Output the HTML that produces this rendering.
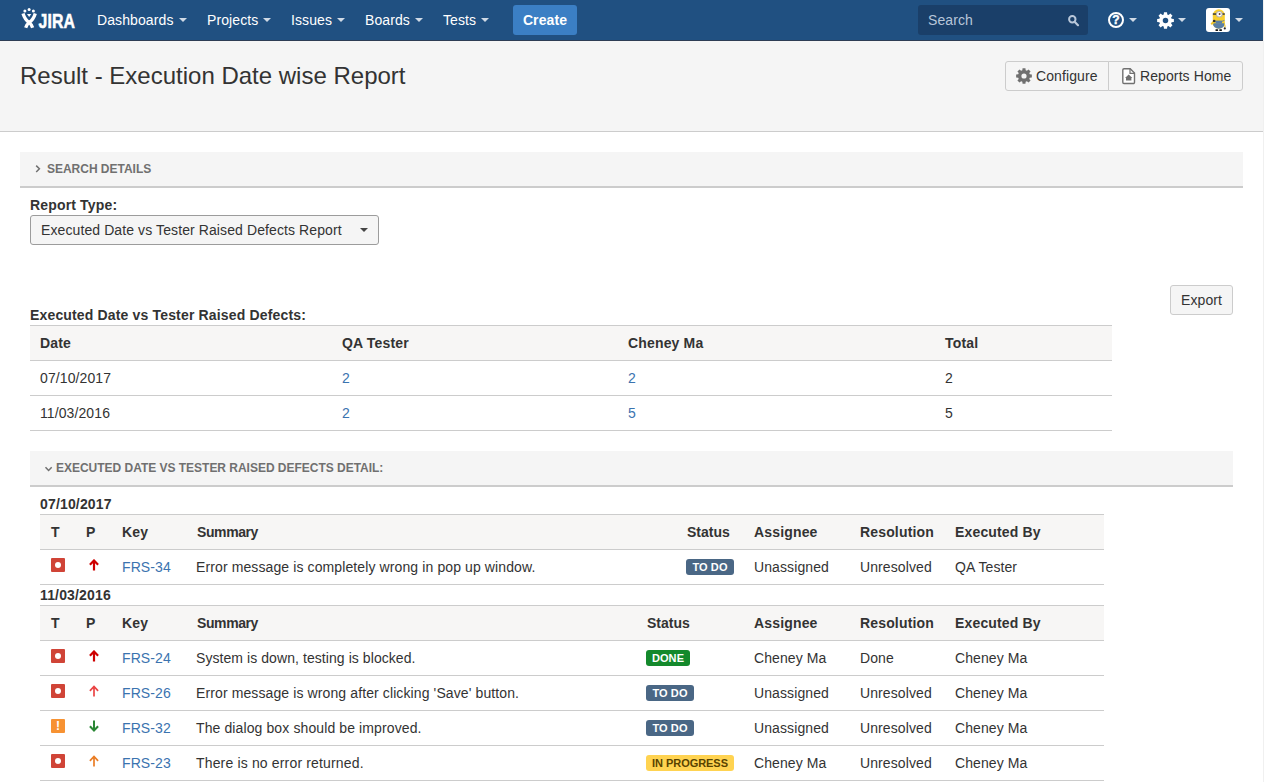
<!DOCTYPE html>
<html lang="en">
<head>
<meta charset="utf-8">
<title>Result - Execution Date wise Report</title>
<style>
*{box-sizing:border-box;}
html,body{margin:0;padding:0;}
body{width:1264px;height:782px;overflow:hidden;background:#fff;color:#333;font-family:"Liberation Sans",Arial,sans-serif;font-size:14px;line-height:20px;position:relative;letter-spacing:0.1px;}
a{color:#3b73af;text-decoration:none;}
/* header */
#hdr{position:absolute;left:0;top:0;width:1264px;height:41px;background:#205081;border-bottom:1px solid #2e3d54;}
#hdr .nav{position:absolute;top:0;height:41px;line-height:40px;color:#fff;font-size:14px;white-space:nowrap;}
#hdr .nav i{display:inline-block;width:0;height:0;border-left:4px solid transparent;border-right:4px solid transparent;border-top:4px solid #d0dae6;margin-left:5px;vertical-align:middle;position:relative;top:-1px;}
#create{position:absolute;left:513px;top:5px;width:64px;height:30px;background:#3b7fc4;border-radius:3px;color:#fff;font-weight:bold;font-size:14px;line-height:30px;text-align:center;}
#search{position:absolute;left:918px;top:5px;width:170px;height:30px;background:#1a3f69;border-radius:3px;color:#b7c6d9;font-size:14px;line-height:30px;padding-left:10px;}
.caret{position:absolute;width:0;height:0;border-left:4px solid transparent;border-right:4px solid transparent;border-top:4px solid #d0dae6;}
/* page header */
#phdr{position:absolute;left:0;top:41px;width:1264px;height:91px;background:#f5f5f5;border-bottom:1px solid #ccc;}
#phdr h1{letter-spacing:0;position:absolute;left:20px;top:20px;margin:0;font-size:24px;line-height:30px;font-weight:normal;color:#333;white-space:nowrap;}
.btn{position:absolute;height:30px;border:1px solid #ccc;background:#f5f5f5;color:#333;font-size:14px;line-height:28px;white-space:nowrap;}
/* content */
.bar{letter-spacing:-0.02px;position:absolute;background:#f5f5f5;border-bottom:2px solid #ccc;height:36px;color:#707070;font-size:12px;font-weight:bold;line-height:34px;white-space:nowrap;}
.lbl{letter-spacing:0.16px;position:absolute;font-weight:bold;color:#333;font-size:14px;line-height:20px;white-space:nowrap;}
table{position:absolute;border-collapse:collapse;table-layout:fixed;font-size:14px;color:#333;}
th{letter-spacing:0.16px;background:#f7f6f5;text-align:left;font-weight:bold;height:35px;padding:0;border-top:1px solid #ccc;border-bottom:1px solid #ccc;white-space:nowrap;}
td{height:35px;padding:0;border-bottom:1px solid #ccc;white-space:nowrap;}
.loz{display:inline-block;font-size:11px;font-weight:bold;line-height:16px;height:16px;padding:0;text-align:center;margin-left:-1px;border-radius:3px;color:#fff;vertical-align:middle;position:relative;top:-1px;letter-spacing:0.1px;}
.todo{background:#4a6785;width:48px;}
.done{background:#14892c;width:44px;}
.prog{background:#ffd351;color:#594300;width:88px;letter-spacing:-0.05px;}
.bug{display:inline-block;width:14px;height:14px;background:#d04437;border-radius:1px;vertical-align:middle;position:relative;left:1px;top:-3px;}
.bug:after{content:"";position:absolute;left:3.9px;top:3.9px;width:6.2px;height:6.2px;border-radius:50%;background:#fff;}
.imp{display:inline-block;width:14px;height:14px;background:#f79232;border-radius:1px;vertical-align:middle;position:relative;left:1px;top:-3px;color:#fff;font-weight:bold;font-size:12px;line-height:14px;text-align:center;}
.ar{position:relative;left:3px;top:-3px;vertical-align:middle;}
.det td.sm{padding-left:0;position:relative;left:-1px;letter-spacing:0.11px;}
.det th.sm0{letter-spacing:-0.4px;}
</style>
</head>
<body>
<div id="hdr">
  <div class="nav" style="left:97px">Dashboards<i></i></div>
  <div class="nav" style="left:207px">Projects<i></i></div>
  <div class="nav" style="left:291px">Issues<i></i></div>
  <div class="nav" style="left:365px">Boards<i></i></div>
  <div class="nav" style="left:443px">Tests<i></i></div>
  <div id="create">Create</div>
  <div id="search">Search</div>
  <svg id="logo" width="97" height="41" viewBox="0 0 97 41" style="position:absolute;left:0;top:0">
    <circle cx="24.9" cy="10.9" r="1.5" fill="#fff"/><circle cx="29.1" cy="9.5" r="1.5" fill="#fff"/><circle cx="33.4" cy="10.9" r="1.5" fill="#fff"/>
    <path d="M23,13.5 C24.6,18.6 26.8,21 29.2,22.5 C30.8,23.6 31.8,25.4 32.6,27.8" stroke="#fff" stroke-width="3.3" fill="none"/>
    <path d="M35.3,13.5 C33.7,18.6 31.5,21 29.1,22.5 C27.5,23.6 26.5,25.4 25.7,27.8" stroke="#fff" stroke-width="3.3" fill="none"/>
    <path d="M27,14.1 L31.3,14.1 L29.15,16.9Z" fill="#fff"/>
    <text x="38.6" y="27.8" font-family="Liberation Sans, Arial, sans-serif" font-weight="bold" font-size="19.6" fill="#fff" stroke="#fff" stroke-width="0.5" textLength="36.4" lengthAdjust="spacingAndGlyphs">JIRA</text>
  </svg>
  <svg width="14" height="14" viewBox="0 0 14 14" style="position:absolute;left:1066px;top:13px"><circle cx="6.3" cy="6.3" r="3.2" stroke="#b9c7d9" stroke-width="2" fill="none"/><path d="M8.6,8.8 L12,12.2" stroke="#b9c7d9" stroke-width="2.2" stroke-linecap="round"/></svg>
  <svg width="18" height="18" viewBox="0 0 18 18" style="position:absolute;left:1107px;top:11px"><circle cx="9" cy="9" r="7" stroke="#fff" stroke-width="2" fill="none"/><text x="9" y="13.2" text-anchor="middle" font-family="Liberation Sans, Arial, sans-serif" font-weight="bold" font-size="12" fill="#fff" stroke="#fff" stroke-width="0.4">?</text></svg>
  <span class="caret" style="left:1129px;top:18px"></span>
  <svg width="17" height="17" viewBox="0 0 16 16" style="position:absolute;left:1157px;top:11.5px"><path fill="#fff" fill-rule="evenodd" d="M6.33,2.24 L6.56,0.13 L9.44,0.13 L9.67,2.24 L10.89,2.74 L12.55,1.42 L14.58,3.45 L13.26,5.11 L13.76,6.33 L15.87,6.56 L15.87,9.44 L13.76,9.67 L13.26,10.89 L14.58,12.55 L12.55,14.58 L10.89,13.26 L9.67,13.76 L9.44,15.87 L6.56,15.87 L6.33,13.76 L5.11,13.26 L3.45,14.58 L1.42,12.55 L2.74,10.89 L2.24,9.67 L0.13,9.44 L0.13,6.56 L2.24,6.33 L2.74,5.11 L1.42,3.45 L3.45,1.42 L5.11,2.74Z M5.40,8.00 a2.60,2.60 0 1,0 5.20,0 a2.60,2.60 0 1,0 -5.20,0Z"/></svg>
  <span class="caret" style="left:1178px;top:18px"></span>
  <svg width="24" height="24" viewBox="0 0 24 24" style="position:absolute;left:1206px;top:8px">
    <rect width="24" height="24" rx="3" fill="#fff"/>
    <rect x="6.8" y="1.3" width="12" height="19.4" rx="6" fill="#f8cf2f"/>
    <path d="M7,15.2 h11.6 v0.6 a5.8,4.9 0 0 1 -11.6,0Z" fill="#5a7fa6"/>
    <rect x="9.6" y="12.6" width="6.4" height="3" fill="#5a7fa6"/>
    <path d="M7.2,12.4 L9.8,13.4 M18.4,12.4 L15.8,13.4" stroke="#5a7fa6" stroke-width="0.9"/>
    <rect x="6.8" y="5.3" width="12" height="1.5" fill="#3a3a3a"/>
    <circle cx="13.3" cy="6.2" r="3.3" fill="#b5b5b5"/><circle cx="13.3" cy="6.2" r="2.3" fill="#fff"/><circle cx="13.6" cy="6" r="0.95" fill="#6b3a1f"/>
    <path d="M7.2,12.8 L4.6,15.6 L5.8,17 L7.8,15.4Z" fill="#f5c726"/><circle cx="8.2" cy="13" r="1.3" fill="#2a2a2a"/>
    <path d="M18.2,13.4 L19.8,18.8 L18.4,19Z" fill="#f5c726"/><circle cx="18.8" cy="20.4" r="1.1" fill="#2a2a2a"/>
    <rect x="9.4" y="21.2" width="2.8" height="1.7" rx="0.6" fill="#151515"/><rect x="13.2" y="21.2" width="2.8" height="1.7" rx="0.6" fill="#151515"/>
  </svg>
  <span class="caret" style="left:1235px;top:18px"></span>
</div>
<div id="phdr">
  <h1>Result - Execution Date wise Report</h1>
  <div class="btn" style="left:1005px;top:20px;width:104px;border-radius:3px 0 0 3px;padding-left:30px;"><svg width="16" height="16" viewBox="0 0 16 16" style="position:absolute;left:10px;top:6px"><path fill="#707070" fill-rule="evenodd" d="M6.33,2.24 L6.56,0.13 L9.44,0.13 L9.67,2.24 L10.89,2.74 L12.55,1.42 L14.58,3.45 L13.26,5.11 L13.76,6.33 L15.87,6.56 L15.87,9.44 L13.76,9.67 L13.26,10.89 L14.58,12.55 L12.55,14.58 L10.89,13.26 L9.67,13.76 L9.44,15.87 L6.56,15.87 L6.33,13.76 L5.11,13.26 L3.45,14.58 L1.42,12.55 L2.74,10.89 L2.24,9.67 L0.13,9.44 L0.13,6.56 L2.24,6.33 L2.74,5.11 L1.42,3.45 L3.45,1.42 L5.11,2.74Z M5.40,8.00 a2.60,2.60 0 1,0 5.20,0 a2.60,2.60 0 1,0 -5.20,0Z"/></svg>Configure</div>
  <div class="btn" style="left:1108px;top:20px;width:135px;border-radius:0 3px 3px 0;padding-left:31px;"><svg width="16" height="18" viewBox="0 0 16 18" style="position:absolute;left:12px;top:5px"><path d="M3,1.8 h6.2 l4.3,4.3 v9.2 a1.2,1.2 0 0 1 -1.2,1.2 h-9.3 a1.2,1.2 0 0 1 -1.2,-1.2 v-12.3 a1.2,1.2 0 0 1 1.2,-1.2Z" fill="#fff" stroke="#707070" stroke-width="1.4"/><path d="M9,1.8 v4.5 h4.5" fill="none" stroke="#707070" stroke-width="1.2"/><path d="M7.7,7.6 L11.4,11 h-1 v2.6 h-5.4 v-2.6 h-1Z" fill="#707070"/></svg>Reports Home</div>
</div>
<div class="bar" style="left:20px;top:152px;width:1223px;padding-left:27px;"><svg width="8" height="10" viewBox="0 0 8 10" style="position:absolute;left:14px;top:12px"><path d="M2.2,1.6 L5.4,4.8 L2.2,8" stroke="#707070" stroke-width="1.5" fill="none"/></svg>SEARCH DETAILS</div>
<div class="lbl" style="left:30px;top:195px;">Report Type:</div>
<div class="btn" style="left:30px;top:215px;width:349px;border-radius:3px;padding-left:10px;background:#f5f5f5;border-color:#9c9c9c;">Executed Date vs Tester Raised Defects Report<span style="position:absolute;left:329px;top:12px;width:0;height:0;border-left:4px solid transparent;border-right:4px solid transparent;border-top:4px solid #444"></span></div>
<div class="btn" style="left:1170px;top:285px;width:63px;border-radius:3px;text-align:center;">Export</div>
<div class="lbl" style="left:30px;top:305px;">Executed Date vs Tester Raised Defects:</div>
<table style="left:30px;top:325px;width:1082px;">
  <colgroup><col style="width:312px"><col style="width:286px"><col style="width:317px"><col style="width:167px"></colgroup>
  <tr><th style="padding-left:10px">Date</th><th>QA Tester</th><th>Cheney Ma</th><th>Total</th></tr>
  <tr><td style="padding-left:10px">07/10/2017</td><td><a>2</a></td><td><a>2</a></td><td>2</td></tr>
  <tr><td style="padding-left:10px">11/03/2016</td><td><a>2</a></td><td><a>5</a></td><td>5</td></tr>
</table>
<div class="bar" style="left:30px;top:451px;width:1203px;padding-left:26px;"><svg width="10" height="8" viewBox="0 0 10 8" style="position:absolute;left:14px;top:14px"><path d="M1.5,2.2 L4.6,5.4 L7.7,2.2" stroke="#707070" stroke-width="1.5" fill="none"/></svg>EXECUTED DATE VS TESTER RAISED DEFECTS DETAIL:</div>
<div class="lbl" style="left:40px;top:494px;">07/10/2017</div>
<table class="det" style="left:40px;top:514px;width:1064px;">
  <colgroup><col style="width:46px"><col style="width:36px"><col style="width:75px"><col style="width:490px"><col style="width:67px"><col style="width:106px"><col style="width:95px"><col style="width:149px"></colgroup>
  <tr><th style="padding-left:11px">T</th><th>P</th><th>Key</th><th class="sm0">Summary</th><th style="letter-spacing:0">Status</th><th>Assignee</th><th>Resolution</th><th>Executed By</th></tr>
  <tr><td style="padding-left:10px"><span class="bug"></span></td><td><svg class="ar" width="10" height="12" viewBox="0 0 10 12"><path d="M5,11.6 V1.6 M0.9,5.8 L5,1.5 L9.1,5.8" stroke="#ce0000" stroke-width="2.2" fill="none"/></svg></td><td><a>FRS-34</a></td><td class="sm">Error message is completely wrong in pop up window.</td><td><span class="loz todo">TO DO</span></td><td>Unassigned</td><td>Unresolved</td><td>QA Tester</td></tr>
</table>
<div class="lbl" style="left:40px;top:585px;">11/03/2016</div>
<table class="det" style="left:40px;top:605px;width:1064px;">
  <colgroup><col style="width:46px"><col style="width:36px"><col style="width:75px"><col style="width:450px"><col style="width:107px"><col style="width:106px"><col style="width:95px"><col style="width:149px"></colgroup>
  <tr><th style="padding-left:11px">T</th><th>P</th><th>Key</th><th class="sm0">Summary</th><th style="letter-spacing:0">Status</th><th>Assignee</th><th>Resolution</th><th>Executed By</th></tr>
  <tr><td style="padding-left:10px"><span class="bug"></span></td><td><svg class="ar" width="10" height="12" viewBox="0 0 10 12"><path d="M5,11.6 V1.6 M0.9,5.8 L5,1.5 L9.1,5.8" stroke="#ce0000" stroke-width="2.2" fill="none"/></svg></td><td><a>FRS-24</a></td><td class="sm" style="letter-spacing:0.07px">System is down, testing is blocked.</td><td><span class="loz done">DONE</span></td><td>Cheney Ma</td><td>Done</td><td>Cheney Ma</td></tr>
  <tr><td style="padding-left:10px"><span class="bug"></span></td><td><svg class="ar" width="10" height="12" viewBox="0 0 10 12"><path d="M5,11.6 V1.6 M0.9,5.8 L5,1.5 L9.1,5.8" stroke="#ea4444" stroke-width="1.7" fill="none"/></svg></td><td><a>FRS-26</a></td><td class="sm">Error message is wrong after clicking 'Save' button.</td><td><span class="loz todo">TO DO</span></td><td>Unassigned</td><td>Unresolved</td><td>Cheney Ma</td></tr>
  <tr><td style="padding-left:10px"><span class="imp">!</span></td><td><svg class="ar" width="10" height="12" viewBox="0 0 10 12"><path d="M5,0.4 V10.4 M0.9,6.2 L5,10.5 L9.1,6.2" stroke="#2a8735" stroke-width="2" fill="none"/></svg></td><td><a>FRS-32</a></td><td class="sm">The dialog box should be improved.</td><td><span class="loz todo">TO DO</span></td><td>Unassigned</td><td>Unresolved</td><td>Cheney Ma</td></tr>
  <tr><td style="padding-left:10px"><span class="bug"></span></td><td><svg class="ar" width="10" height="12" viewBox="0 0 10 12"><path d="M5,11.6 V1.6 M0.9,5.8 L5,1.5 L9.1,5.8" stroke="#ea7d24" stroke-width="1.7" fill="none"/></svg></td><td><a>FRS-23</a></td><td class="sm" style="letter-spacing:0.16px">There is no error returned.</td><td><span class="loz prog">IN PROGRESS</span></td><td>Cheney Ma</td><td>Unresolved</td><td>Cheney Ma</td></tr>
</table>
<div style="position:absolute;left:1263px;top:0;width:1px;height:782px;background:#f0f0f0"></div>
</body>
</html>
